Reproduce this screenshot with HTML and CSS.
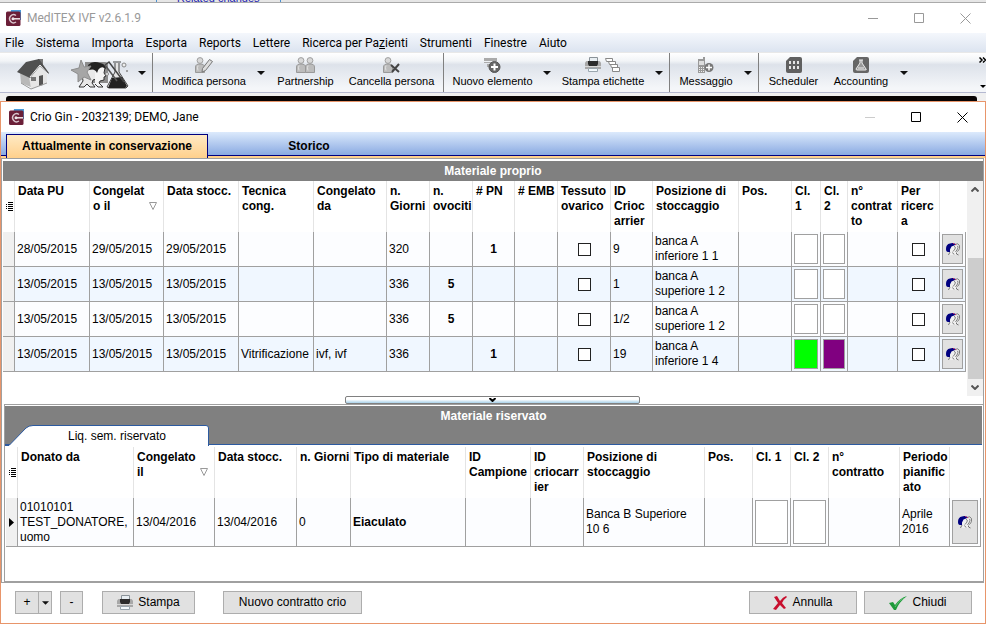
FILE: index.html
```
<!DOCTYPE html>
<html lang="it">
<head>
  <meta charset="UTF-8" />
  <meta name="viewport" content="width=device-width, initial-scale=1.0"/>
  <title>MedITEX IVF v2.6.1.9</title>
  <link rel="stylesheet" href="styles.css">
</head>
<body>
  <!-- Icone usate più volte -->
  <svg class="simboli" aria-hidden="true">
    <symbol id="logo" viewBox="0 0 15 16">
      <path d="M5 0h10v10H3z" fill="#4a9ad8"/>
      <rect y="1.500" width="14.500" height="14.500" rx="1.500" fill="#6b1f38"/>
      <path d="M10 5.500A4 4 0 1 0 10 12" fill="none" stroke="#d8c4cc" stroke-width="1.500"/>
      <path d="M6 8.800h8" stroke="#f0e8ea" stroke-width="1.500"/>
      <circle cx="7" cy="8.800" r="1.500" fill="#f0e8ea"/>
    </symbol>
    <symbol id="volti" viewBox="0 0 14 13">
      <path d="M5 3h7l1.500 2-1 3-1 2v2H3V7z" fill="#f0f0f0"/>
      <path d="M0 6Q0 1 4 .5 7-.5 9.500 1L8 2.500 5.500 3.500 4 6.500v2.500H2Q0 9 0 6z" fill="#000080"/>
      <path d="M9 1.500q3-2 4.500 1 .5 3-1 5L11 8.500M8 3q2 .5 1 3L7 8.500M11.500 3q1 1 0 3l-2 3" fill="none" stroke="#666" stroke-width=".8"/>
      <path d="M4 9l-1.500 3M6.500 9.500L8 11.500M10.500 9.500v1.500l2 1" fill="none" stroke="#555" stroke-width=".8"/>
      <path d="M7 .500h1M9 1.500h1" stroke="#d02060"/>
    </symbol>
    <symbol id="riduci" viewBox="0 0 11 11"><path d="M0 5.500h10" stroke="currentColor"/></symbol>
    <symbol id="ingrandisci" viewBox="0 0 11 11"><path d="M.5.500h9v9h-9z" fill="none" stroke="currentColor"/></symbol>
    <symbol id="chiudi" viewBox="0 0 11 11"><path d="M.5.500l10 10M10.500.500l-10 10" stroke="currentColor"/></symbol>
    <symbol id="freccia" viewBox="0 0 8 4"><path d="M0 0h8L4 4z" fill="#111"/></symbol>
    <symbol id="ordine" viewBox="0 0 8 8"><path d="M.5.500h7L4 7.500z" fill="none" stroke="#999"/></symbol>
    <symbol id="elenco" viewBox="0 0 7 9"><path d="M2 .5h5M2 2.500h5M2 4.500h5M2 6.500h5M2 8.500h5M0 2.500h1M0 4.500h1M0 6.500h1" stroke="#000"/></symbol>
    <symbol id="stampante" viewBox="0 0 16 16">
      <path d="M4.500.500h8V5h-8z" fill="#e8eef2" stroke="#8a9298"/>
      <path d="M1.500 4h13L16 5.500V12H0V5.500z" fill="#a8a8a8"/>
      <path d="M3 4h10v3l-1 2H4L3 7z" fill="#2c2c2c"/>
      <path d="M0 9.500h16" stroke="#d8d8d8"/>
      <path d="M3.500 11.500h9v3h-9z" fill="#f4fafd" stroke="#9aa6ae"/>
    </symbol>
    <symbol id="persona" viewBox="0 0 10 16">
      <circle cx="5" cy="3.500" r="2.900" fill="#d8d8d8" stroke="#a0a0a0"/>
      <path d="M.5 15.500V10q0-3 4.500-3t4.500 3v5.500z" fill="#bcbcbc" stroke="#999"/>
      <path d="M3 8.500q-1 2 0 5" fill="none" stroke="#e4e4e4"/>
    </symbol>
  </svg>

  <div class="sfondo"><a href="#">Related changes</a></div>

  <header class="principale">
    <div class="titolo inattivo">
      <svg class="logo"><use href="#logo"/></svg>
      <h1>MedITEX IVF v2.6.1.9</h1>
      <div class="finestra">
        <button aria-label="Riduci"><svg><use href="#riduci"/></svg></button>
        <button aria-label="Ingrandisci"><svg><use href="#ingrandisci"/></svg></button>
        <button aria-label="Chiudi finestra"><svg><use href="#chiudi"/></svg></button>
      </div>
    </div>

    <nav class="menu">
      <a href="#">File</a>
      <a href="#">Sistema</a>
      <a href="#">Importa</a>
      <a href="#">Esporta</a>
      <a href="#">Reports</a>
      <a href="#">Lettere</a>
      <a href="#">Ricerca per Pa<u>z</u>ienti</a>
      <a href="#">Strumenti</a>
      <a href="#">Finestre</a>
      <a href="#">Aiuto</a>
    </nav>

    <div class="strumenti">
      <button class="casa" aria-label="Home">
        <svg width="32" height="32" viewBox="0 0 32 32">
          <path d="M3 14l9-8 4 14v10L4 25z" fill="#b8b8b8"/>
          <path d="M12 18l10-10 8 8v9l-16 6z" fill="#e6e6e6"/>
          <path d="M21 1h5v9l-5-4z" fill="#777"/>
          <path d="M0 14L9 4l13-3 10 14-1 1-8-8-10 12z" fill="#505050"/>
          <path d="M13 19L23 7l8 9" fill="none" stroke="#f4f4f4"/>
          <path d="M14 19h5v4h-5z" fill="#777"/>
          <path d="M22 18l4-1v10l-4 1z" fill="#555"/>
          <path d="M4 25l10 6 16-6" fill="none" stroke="#999"/>
        </svg>
      </button>
      <button class="paziente" aria-label="Pazienti">
        <svg width="58" height="30" viewBox="0 0 58 30">
          <path d="M14 2h20q3 0 3 3v18H14z" fill="#8c8c8c"/>
          <path d="M16 10q2-7 8-7l4 3-2 4 1 4-2 2v3l-3 1-1 3 3 4h-5l-3-3-3 3H8l4-6-1-7z" fill="#e8e8e8" stroke="#333"/>
          <path d="M24 8q5-5 10 0l-1 5 2 3-2 1v3l-4 1-1 2 4 4h-5l-3-3" fill="#f4f4f4" stroke="#333"/>
          <path d="M17 5q5-5 12-2 6 1 6 6-3-3-6-1-2 1-3 5-2-5-8-3z" fill="#222"/>
          <path d="M10 0l3 7 7-1-4 6 4 8-7-3-6 5V14L0 10l8-2z" fill="#a6a6a6" stroke="#8c8c8c"/>
          <path d="M42 2h8M44 3v9L36 27l2 1h17l2-2-9-14V3" fill="#e4e4e4" stroke="#444"/>
          <path d="M41 18l10-1 5 9-2 2H37z" fill="#222"/>
          <path d="M34 5l4-3 15 20" fill="none" stroke="#444" stroke-width="1.500"/>
          <path d="M34 5l12 16" stroke="#555" stroke-width="1.500"/>
          <circle cx="53" cy="5" r="2" fill="#eee" stroke="#888"/>
          <circle cx="56" cy="11" r="1" fill="#888"/>
          <circle cx="36" cy="14" r="1.500" fill="#eee" stroke="#888"/>
        </svg>
      </button>
      <button class="tendina" aria-label="Altri pazienti"><svg><use href="#freccia"/></svg></button>
      <button class="voce modifica">
        <svg width="18" height="16" viewBox="0 0 18 16"><use href="#persona" width="10" height="16"/><path d="M7.500 11.500l7-9 3 2-7 9-3.500 1.500z" fill="#ddd" stroke="#777"/></svg>
        Modifica persona
      </button>
      <button class="tendina" aria-label="Opzioni persona"><svg><use href="#freccia"/></svg></button>
      <button class="voce partner">
        <svg width="20" height="16" viewBox="0 0 20 16"><use href="#persona" width="10" height="16"/><use href="#persona" x="9" width="10" height="16"/></svg>
        Partnership
      </button>
      <button class="voce cancella">
        <svg width="17" height="16" viewBox="0 0 17 16"><use href="#persona" width="10" height="16"/><path d="M8 8l8 7M16 7l-7 8" stroke="#444" stroke-width="2"/></svg>
        Cancella persona
      </button>
      <button class="voce nuovo">
        <svg width="17" height="16" viewBox="0 0 17 16"><path d="M0 1h13v3H0zM0 5h12v1H0zM3 7h8v3H3z" fill="#aaa"/><circle cx="10.500" cy="10" r="5.500" fill="#666" stroke="#555"/><path d="M7 10h7M10.500 6.500v7" stroke="#fff" stroke-width="2"/></svg>
        Nuovo elemento
      </button>
      <button class="tendina" aria-label="Opzioni elemento"><svg><use href="#freccia"/></svg></button>
      <button class="voce etichette">
        <svg width="36" height="16" viewBox="0 0 36 16"><use href="#stampante" width="16" height="16"/><path d="M20.500 1.500h7v3h-6zM23.500 4.500h7v3h-6zM25.500 7.500h7v3h-6zM27.500 10.500h7v4h-7z" fill="#fff" stroke="#888"/></svg>
        Stampa etichette
      </button>
      <button class="tendina" aria-label="Opzioni etichette"><svg><use href="#freccia"/></svg></button>
      <button class="voce messaggio">
        <svg width="16" height="16" viewBox="0 0 16 16"><path d="M5 0h2v3H5zM0 2h7v14H0z" fill="#999"/><path d="M1 4h5v4H1z" fill="#ddd"/><path d="M1 10.500h5M1 12.500h5M1 14.500h5" stroke="#eee" stroke-dasharray="1 1"/><circle cx="11" cy="10.500" r="4.500" fill="#777"/><path d="M8 10.500h6M11 7.500v6" stroke="#fff" stroke-width="1.500"/></svg>
        Messaggio
      </button>
      <button class="tendina" aria-label="Opzioni messaggio"><svg><use href="#freccia"/></svg></button>
      <button class="voce agenda">
        <svg width="16" height="16" viewBox="0 0 16 16"><path d="M4 0h10q2 0 2 2v12q0 2-2 2H2q-2 0-2-2V4z" fill="#606060"/><path d="M3 4h2v3H3zM7 4h2v3H7zM11 4h2v3h-2zM3 9h2v3H3zM7 9h2v3H7zM11 9h2v3h-2z" fill="#e4e4e4"/></svg>
        Scheduler
      </button>
      <button class="voce conti">
        <svg width="16" height="16" viewBox="0 0 16 16"><path d="M4 0h10q2 0 2 2v12q0 2-2 2H2q-2 0-2-2V4z" fill="#666"/><path d="M6 3h4M7 3v3l-4 6q0 1 1 1h8q2 0 1-1L9 6V3" fill="#999" stroke="#eee"/><path d="M5 11h6" stroke="#eee"/></svg>
        Accounting
      </button>
      <button class="tendina" aria-label="Opzioni accounting"><svg><use href="#freccia"/></svg></button>
      <button class="altro" aria-label="Altri comandi">
        <svg width="7" height="6" viewBox="0 0 7 6"><path d="M.5.500L3 3 .5 5.500M4 .5L6.500 3 4 5.500" fill="none" stroke="#000" stroke-width="1.500"/></svg>
        <svg width="6" height="3" viewBox="0 0 6 3"><path d="M0 0h6L3 3z"/></svg>
      </button>
    </div>
  </header>

  <div class="banda"></div>

  <main class="dialogo">
    <div class="titolo">
      <svg class="logo"><use href="#logo"/></svg>
      <h2>Crio Gin - 2032139; DEMO, Jane</h2>
      <div class="finestra">
        <button aria-label="Riduci" disabled><svg><use href="#riduci"/></svg></button>
        <button aria-label="Ingrandisci"><svg><use href="#ingrandisci"/></svg></button>
        <button aria-label="Chiudi finestra"><svg><use href="#chiudi"/></svg></button>
      </div>
    </div>

    <div class="schede">
      <button class="scheda attiva">Attualmente in conservazione</button>
      <button class="scheda">Storico</button>
    </div>

    <div class="contenuto">
      <section class="proprio">
        <h3>Materiale proprio</h3>
        <div class="griglia">
          <table>
            <colgroup>
              <col class="w12"><col class="w75"><col class="w74"><col class="w75"><col class="w75"><col class="w73"><col class="w43"><col class="w43"><col class="w42"><col class="w43"><col class="w53"><col class="w42"><col class="w86"><col class="w53"><col class="w29"><col class="w27"><col class="w50"><col class="w42"><col class="w26">
            </colgroup>
            <thead>
              <tr>
                <th class="indice"><svg><use href="#elenco"/></svg></th>
                <th>Data PU</th>
                <th>Congelat<br>o il<svg class="ordine"><use href="#ordine"/></svg></th>
                <th>Data stocc.</th>
                <th>Tecnica<br>cong.</th>
                <th>Congelato<br>da</th>
                <th>n.<br>Giorni</th>
                <th>n.<br>ovociti</th>
                <th># PN</th>
                <th># EMB</th>
                <th>Tessuto<br>ovarico</th>
                <th>ID<br>Crioc<br>arrier</th>
                <th>Posizione di<br>stoccaggio</th>
                <th>Pos.</th>
                <th>Cl.<br>1</th>
                <th>Cl.<br>2</th>
                <th>n°<br>contrat<br>to</th>
                <th>Per<br>ricerc<br>a</th>
                <th></th>
              </tr>
            </thead>
            <tbody>
              <tr>
                <td class="indice"></td><td>28/05/2015</td><td>29/05/2015</td><td>29/05/2015</td><td></td><td></td><td>320</td><td class="centro"></td><td class="centro">1</td><td></td>
                <td class="centro"><input type="checkbox" aria-label="Tessuto ovarico"></td><td>9</td><td>banca A<br>inferiore 1 1</td><td></td>
                <td class="colore"><div></div></td><td class="colore"><div></div></td><td></td>
                <td class="centro"><input type="checkbox" aria-label="Per ricerca"></td><td class="colore"><button aria-label="Apri coppia"><svg><use href="#volti"/></svg></button></td>
              </tr>
              <tr>
                <td class="indice"></td><td>13/05/2015</td><td>13/05/2015</td><td>13/05/2015</td><td></td><td></td><td>336</td><td class="centro">5</td><td class="centro"></td><td></td>
                <td class="centro"><input type="checkbox" aria-label="Tessuto ovarico"></td><td>1</td><td>banca A<br>superiore 1 2</td><td></td>
                <td class="colore"><div></div></td><td class="colore"><div></div></td><td></td>
                <td class="centro"><input type="checkbox" aria-label="Per ricerca"></td><td class="colore"><button aria-label="Apri coppia"><svg><use href="#volti"/></svg></button></td>
              </tr>
              <tr>
                <td class="indice"></td><td>13/05/2015</td><td>13/05/2015</td><td>13/05/2015</td><td></td><td></td><td>336</td><td class="centro">5</td><td class="centro"></td><td></td>
                <td class="centro"><input type="checkbox" aria-label="Tessuto ovarico"></td><td>1/2</td><td>banca A<br>superiore 1 2</td><td></td>
                <td class="colore"><div></div></td><td class="colore"><div></div></td><td></td>
                <td class="centro"><input type="checkbox" aria-label="Per ricerca"></td><td class="colore"><button aria-label="Apri coppia"><svg><use href="#volti"/></svg></button></td>
              </tr>
              <tr>
                <td class="indice"></td><td>13/05/2015</td><td>13/05/2015</td><td>13/05/2015</td><td>Vitrificazione</td><td>ivf, ivf</td><td>336</td><td class="centro"></td><td class="centro">1</td><td></td>
                <td class="centro"><input type="checkbox" aria-label="Tessuto ovarico"></td><td>19</td><td>banca A<br>inferiore 1 4</td><td></td>
                <td class="colore"><div class="verde"></div></td><td class="colore"><div class="viola"></div></td><td></td>
                <td class="centro"><input type="checkbox" aria-label="Per ricerca"></td><td class="colore"><button aria-label="Apri coppia"><svg><use href="#volti"/></svg></button></td>
              </tr>
            </tbody>
          </table>
          <div class="scorrimento">
            <svg width="8" height="5" viewBox="0 0 8 5"><path d="M.5 4.500L4 1l3.500 3.500" fill="none" stroke="#555" stroke-width="2"/></svg>
            <div class="cursore"></div>
            <svg width="8" height="5" viewBox="0 0 8 5"><path d="M.5.500L4 4 7.500.500" fill="none" stroke="#555" stroke-width="2"/></svg>
          </div>
        </div>
      </section>

      <button class="divisore" aria-label="Nascondi pannello"><svg width="7" height="4" viewBox="0 0 7 4"><path d="M.5 0l3 3 3-3" fill="none" stroke="#000" stroke-width="2"/></svg></button>

      <section class="riservato">
        <div class="testata">
          <h3>Materiale riservato</h3>
          <button class="linguetta">
            <svg width="204" height="21" viewBox="0 0 204 21"><path d="M0 20.500h4L21 3q3-2.500 7-2.500h173q2.500 0 2.500 2.500v18" fill="#fff" stroke="#2c5aa0"/></svg>
            <span>Liq. sem. riservato</span>
          </button>
        </div>
        <table>
          <colgroup>
            <col class="w12"><col class="w116"><col class="w81"><col class="w82"><col class="w54"><col class="w115"><col class="w65"><col class="w53"><col class="w121"><col class="w48"><col class="w38"><col class="w38"><col class="w71"><col class="w50"><col class="w31">
          </colgroup>
          <thead>
            <tr>
              <th class="indice"><svg><use href="#elenco"/></svg></th>
              <th>Donato da</th>
              <th>Congelato<br>il<svg class="ordine"><use href="#ordine"/></svg></th>
              <th>Data stocc.</th>
              <th>n. Giorni</th>
              <th>Tipo di materiale</th>
              <th>ID<br>Campione</th>
              <th>ID<br>criocarr<br>ier</th>
              <th>Posizione di<br>stoccaggio</th>
              <th>Pos.</th>
              <th>Cl. 1</th>
              <th>Cl. 2</th>
              <th>n°<br>contratto</th>
              <th>Periodo<br>pianific<br>ato</th>
              <th></th>
            </tr>
          </thead>
          <tbody>
            <tr>
              <td class="indice"><svg class="corrente" width="5" height="9" viewBox="0 0 5 9"><path d="M0 0l5 4.500L0 9z"/></svg></td>
              <td>01010101<br>TEST_DONATORE,<br>uomo</td><td>13/04/2016</td><td>13/04/2016</td><td>0</td><td><b>Eiaculato</b></td><td></td><td></td>
              <td>Banca B Superiore<br>10 6</td><td></td><td class="colore"><div></div></td><td class="colore"><div></div></td><td></td><td>Aprile<br>2016</td>
              <td class="colore"><button aria-label="Apri coppia"><svg><use href="#volti"/></svg></button></td>
            </tr>
          </tbody>
        </table>
      </section>
    </div>

    <footer class="azioni">
      <div class="gruppo">
        <button class="piu">+</button>
        <button class="apri" aria-label="Scegli tipo"><svg width="7" height="4"><use href="#freccia"/></svg></button>
      </div>
      <button class="meno">-</button>
      <button class="stampa"><svg width="16" height="16"><use href="#stampante"/></svg>Stampa</button>
      <button class="contratto">Nuovo contratto crio</button>
      <button class="annulla">
        <svg width="14" height="14" viewBox="0 0 14 14"><path d="M1 1l3-1 3 5q3-4 6-5l1 1Q10 4 9 7l4 5-2 1-4-4-4 5-3-1 5-6z" fill="#c8102e"/></svg>Annulla
      </button>
      <button class="conferma">
        <svg width="18" height="14" viewBox="0 0 18 14"><path d="M0 7l4-1 2 3Q11 2 18 0q-8 6-11 14H5z" fill="#1e9a3a"/><path d="M6 11q4-7 9-9" fill="none" stroke="#5cc070"/></svg>Chiudi
      </button>
    </footer>
  </main>
</body>
</html>
```

FILE: styles.css
```
:root {
  --arancio: #e8956a;
  --bordo: #a0a0a0;
  --grigio: #808080;
  --carattere: "Liberation Sans", Arial, sans-serif;
  --carattere-menu: Roboto, "Open Sans", sans-serif;
}

* {
  margin: 0;
  padding: 0;
  box-sizing: border-box;
}

body {
  min-height: 100vh;
  display: flex;
  flex-direction: column;
  background: #f0f0f0;
  font: 12px/15px var(--carattere);
  color: #000;
}

button {
  border: none;
  background: none;
  font: inherit;
  color: inherit;
}

svg {
  display: block;
}

.simboli {
  position: absolute;
  width: 0;
  height: 0;
}

/* Pagina dietro la finestra */
.sfondo {
  height: 3px;
  display: flex;
  align-items: flex-end;
  overflow: hidden;
  padding-left: 156px;
  background: #e6e6e6;
  border-bottom: 1px solid #aaa;
}

.sfondo a {
  padding: 0 20px;
  border: solid #4a90d0;
  border-width: 0 1px;
  font-size: 11px;
  line-height: 7px;
  color: #1a1ab0;
  text-decoration: none;
}

/* Barre del titolo */
.titolo {
  display: flex;
  align-items: center;
  height: 30px;
  padding-left: 6px;
  background: #fff;
}

.titolo .logo {
  width: 15px;
  height: 16px;
}

.titolo h1,
.titolo h2 {
  flex: 1;
  margin-left: 6px;
  font: 12px/16px var(--carattere-menu);
}

.inattivo {
  color: #999;
}

.finestra {
  display: flex;
  gap: 4px;
}

.finestra button {
  width: 42px;
  height: 28px;
  display: flex;
  align-items: center;
  justify-content: center;
}

.finestra svg {
  width: 11px;
  height: 11px;
}

.finestra button:disabled {
  color: #ccc;
}

/* Menu */
.menu {
  display: flex;
  gap: 12px;
  height: 20px;
  padding-left: 5px;
  background: linear-gradient(#f4f7fc, #dce4f0);
  border-bottom: 1px solid #e8e8e8;
  font: 12px/20px var(--carattere-menu);
}

.menu a {
  color: #000;
  text-decoration: none;
}

/* Barra degli strumenti */
.strumenti {
  display: flex;
  height: 40px;
  background: linear-gradient(#fff, #f2f4f7 20%, #dde2ea 30%, #f4f6f9 90%);
  border-bottom: 1px solid #b4b8d0;
}

.strumenti button {
  flex: none;
}

.casa {
  padding: 3px 0 0 17px;
  width: 71px;
}

.paziente {
  width: 61px;
  padding-top: 4px;
}

.tendina {
  width: 20px;
  display: flex;
  align-items: center;
  justify-content: center;
}

.tendina svg {
  width: 8px;
  height: 4px;
}

.voce {
  display: flex;
  flex-direction: column;
  align-items: center;
  gap: 1px;
  padding-top: 4px;
  font-size: 11px;
  line-height: 14px;
  white-space: nowrap;
}

.modifica,
.nuovo,
.messaggio {
  padding-left: 4px;
}

.modifica,
.nuovo,
.messaggio,
.agenda {
  border-left: 1px solid var(--grigio);
}

.modifica { width: 99px; }
.partner { width: 69px; }
.cancella { width: 103px; }
.nuovo { width: 94px; }
.etichette { width: 92px; }
.messaggio { width: 69px; }
.agenda { width: 70px; }
.conti { width: 66px; }

.altro {
  margin-left: auto;
  display: flex;
  flex-direction: column;
  justify-content: space-between;
  align-items: center;
  padding: 4px 0;
}

.banda {
  height: 5px;
  margin: 3px 9px 0 6px;
  border-radius: 3px 3px 0 0;
  background: #080404;
}

/* Finestra di dialogo */
.dialogo {
  flex: 1;
  display: flex;
  flex-direction: column;
  border: 1px solid var(--arancio);
  background: #fff;
}

.dialogo > .titolo {
  padding: 0 2px 0 8px;
}

.schede {
  display: flex;
  align-items: flex-end;
  height: 26px;
  padding-left: 5px;
  background: linear-gradient(#dceafc, #8aaae2 23px, #000080 23px, #000080 24px, #ffd08c 24px);
}

.scheda {
  width: 202px;
  height: 24px;
  font-weight: bold;
}

.scheda.attiva {
  border: 1px solid #000080;
  border-bottom: none;
  background: linear-gradient(#ffeac4, #ffd08c);
}

.contenuto {
  flex: 1;
  display: flex;
  flex-direction: column;
  margin-right: 1px;
  padding-top: 2px;
  border: 1px solid var(--bordo);
}

h3 {
  height: 20px;
  font-size: 12px;
  line-height: 20px;
  text-align: center;
  color: #fff;
  background: var(--grigio);
}

.proprio {
  margin-left: 1px;
}

.griglia {
  display: flex;
  min-height: 215px;
  align-items: flex-start;
}

table {
  width: 100%;
  table-layout: fixed;
  border-spacing: 0;
}

.griglia table {
  flex: 1;
}

.w12 { width: 12px; }
.w26 { width: 26px; }
.w27 { width: 27px; }
.w29 { width: 29px; }
.w31 { width: 31px; }
.w38 { width: 38px; }
.w42 { width: 42px; }
.w43 { width: 43px; }
.w48 { width: 48px; }
.w50 { width: 50px; }
.w53 { width: 53px; }
.w54 { width: 54px; }
.w65 { width: 65px; }
.w71 { width: 71px; }
.w73 { width: 73px; }
.w74 { width: 74px; }
.w75 { width: 75px; }
.w81 { width: 81px; }
.w82 { width: 82px; }
.w86 { width: 86px; }
.w115 { width: 115px; }
.w116 { width: 116px; }
.w121 { width: 121px; }

th {
  position: relative;
  height: 51px;
  padding: 3px 0 0 3px;
  border-right: 1px solid #e4e4e4;
  text-align: left;
  vertical-align: top;
  white-space: nowrap;
}

th:last-child {
  border-right-color: transparent;
}

th.indice {
  padding: 0 0 0 3px;
  vertical-align: middle;
}

th.indice svg {
  width: 7px;
  height: 9px;
}

.ordine {
  position: absolute;
  right: 6px;
  top: 21px;
  width: 8px;
  height: 8px;
}

td {
  height: 35px;
  padding-left: 2px;
  border-right: 1px solid var(--bordo);
  border-bottom: 1px solid var(--bordo);
  background: #fcfdff;
  white-space: nowrap;
}

tr:nth-child(even) td {
  background: #f0f7ff;
}

td.indice,
tr:nth-child(even) td.indice {
  padding-left: 3px;
  background: #f0f0f0;
}

.centro {
  padding: 0;
  font-weight: bold;
  text-align: center;
}

td input {
  display: block;
  appearance: none;
  width: 13px;
  height: 13px;
  margin: 0 auto;
  border: 1px solid #222;
  background: #fff;
}

td.colore {
  padding: 2px;
}

.colore div,
.colore button {
  height: 30px;
  border: 1px solid var(--bordo);
  background: #fff;
}

.colore button {
  width: 100%;
  display: flex;
  align-items: center;
  justify-content: center;
  background: #e1e1e1;
}

.colore button svg {
  flex: none;
  width: 14px;
  height: 13px;
}

.colore .verde {
  background: #00ff00;
}

.colore .viola {
  background: #800080;
}

.scorrimento {
  flex: none;
  align-self: stretch;
  width: 16px;
  margin-left: 1px;
  padding: 6px 0;
  display: flex;
  flex-direction: column;
  align-items: center;
  background: #f0f0f0;
}

.cursore {
  width: 15px;
  height: 121px;
  margin: auto 0 6px;
  background: #cdcdcd;
}

.divisore {
  width: 30%;
  height: 8px;
  margin: 0 auto;
  display: flex;
  align-items: center;
  justify-content: center;
  border: 1px solid var(--grigio);
  border-radius: 2px;
  background: linear-gradient(#fff 40%, #a8d0e8);
}

/* Materiale riservato */
.riservato {
  flex: 1;
  margin-left: 2px;
  padding-right: 1px;
  border: 1px solid var(--bordo);
  border-right: none;
}

.testata {
  display: flex;
  flex-direction: column;
  height: 40px;
  border-top: 1px solid #fff;
  border-bottom: 1px solid #2c5aa0;
  background: var(--grigio);
}

.linguetta {
  position: relative;
  width: 204px;
  height: 20px;
  margin-top: -1px;
}

.linguetta span {
  position: absolute;
  inset: 4px 0 0 20px;
}

.riservato table {
  margin-top: 2px;
  padding: 0 1px;
}

.riservato td {
  height: 49px;
}

.riservato .colore div,
.riservato .colore button {
  height: 44px;
}

/* Pulsanti in basso */
.azioni {
  display: flex;
  height: 40px;
  padding: 8px 13px 0 14px;
}

.azioni button {
  height: 23px;
  display: flex;
  align-items: center;
  justify-content: center;
  gap: 5px;
  border: 1px solid #adadad;
  background: #e1e1e1;
}

.gruppo {
  display: flex;
}

.azioni .piu { width: 24px; }
.azioni .apri { width: 13px; border-left: none; }
.azioni .meno { width: 23px; margin-left: 8px; }
.azioni .stampa { width: 93px; margin-left: 19px; }
.azioni .contratto { width: 139px; margin-left: 28px; }
.azioni .annulla { width: 108px; margin-left: auto; }
.azioni .conferma { width: 108px; margin-left: 7px; }
```
